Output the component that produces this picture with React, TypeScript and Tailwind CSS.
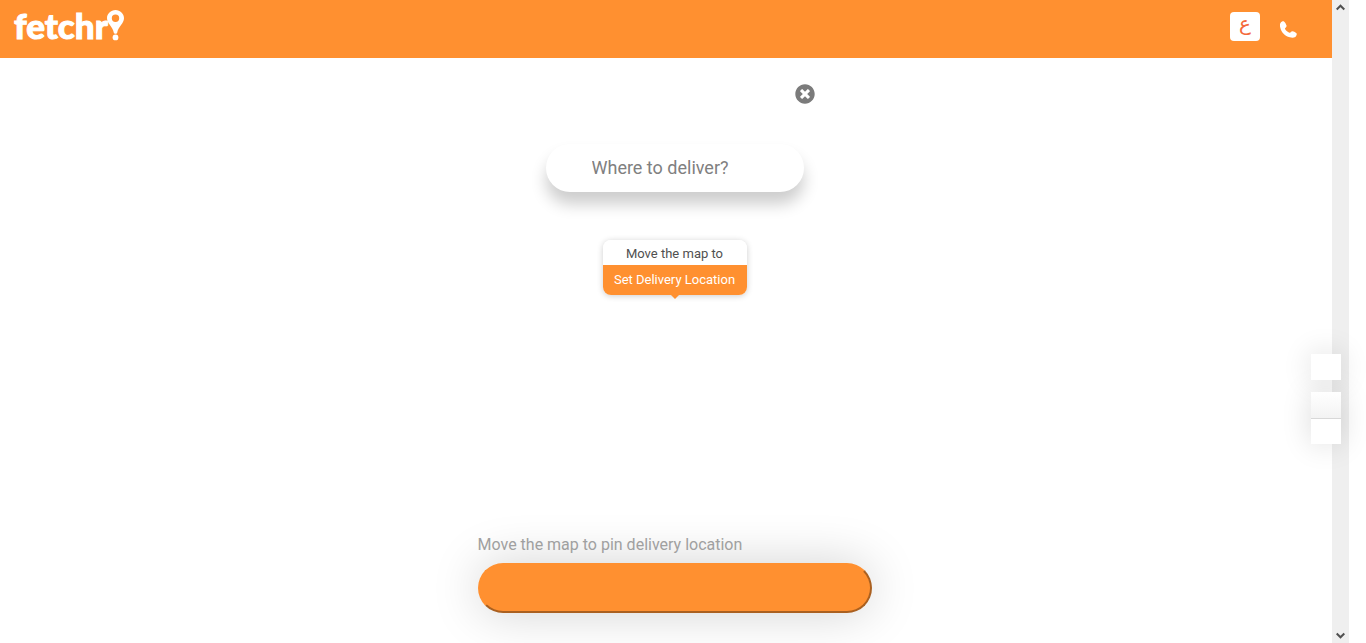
import { FaTimesCircle } from "react-icons/fa";

function Logo() {
  return (
    <a href="#" aria-label="fetchr" className="flex items-start text-white">
      <span className="pt-0.5 font-['Lato',sans-serif] text-[35px] leading-[46px] font-black [-webkit-text-stroke:1px_white]">fetchr</span>
      <svg viewBox="0 0 17 31" className="mt-[10px] -ml-px h-[31px] w-[17px]" fill="currentColor" aria-hidden="true">
        <path
          fillRule="evenodd"
          d="M8.5 0C3.800 0 0 3.700 0 8.300c0 5.200 5.600 8.200 6.900 14.600.200 1 3 1 3.200 0C11.400 16.500 17 13.500 17 8.300 17 3.700 13.200 0 8.500 0Zm0 4.600a3.700 3.700 0 1 1 0 7.400 3.700 3.700 0 0 1 0-7.400Z"
        />
        <circle cx="8.500" cy="27.400" r="2.900" />
      </svg>
    </a>
  );
}

function Header() {
  return (
    <header className="flex h-[58px] shrink-0 items-start justify-between bg-[#ff9030] pr-[35px] pl-[14px]">
      <Logo />
      <nav className="flex items-center gap-5 pt-3">
        <button
          type="button"
          aria-label="Arabic"
          className="flex h-[29px] w-[30px] items-center justify-center rounded bg-white font-['DejaVu_Sans',sans-serif] text-xl leading-5 text-[#f4693b]"
        >
          <span lang="ar" className="-mt-2">ع</span>
        </button>
        <a href="#call" aria-label="Call" className="pt-1.5 text-white">
          <svg viewBox="0 0 52 52" className="size-[17px]" fill="currentColor" aria-hidden="true">
            <path d="M2 5C5 1 10-1 13 2c3 3 6 8 7 12 1 4-4 6-5 9 2 6 8 11 14 13 3 0 5-5 9-5 5 1 10 3 13 7 1 4-1 8-4 11-5 3-11 3-17 1C15 46 4 36 1 21-1 15-1 9 2 5Z" />
          </svg>
        </a>
      </nav>
    </header>
  );
}

function MapCallout() {
  return (
    <div className="mt-12 flex w-36 flex-col items-center text-[13px]">
      <div className="w-full overflow-hidden rounded-lg text-center shadow-[0_1px_6px_rgba(0,0,0,0.2)]">
        <p className="bg-white pt-0.5 leading-[23px] text-[#505050]">Move the map to</p>
        <p className="bg-[#ff9030] leading-[30px] text-white">Set Delivery Location</p>
      </div>
      <svg viewBox="0 0 8 4" className="h-1 w-2" fill="#ff9030" aria-hidden="true">
        <path d="M0 0h8L4 4Z" />
      </svg>
    </div>
  );
}

function MapControls() {
  return (
    <div className="absolute top-[354px] right-[25px] flex w-[30px] flex-col gap-3">
      <button type="button" aria-label="My location" className="relative z-10 h-[26px] bg-white shadow-[0_0_30px_rgba(0,0,0,0.14)]" />
      <div className="flex flex-col divide-y divide-[#d8d8d8] bg-white shadow-[0_0_30px_rgba(0,0,0,0.14)]">
        <button type="button" aria-label="Zoom in" className="relative z-20 h-[27px] bg-linear-to-b from-white to-[#f3f3f3]" />
        <button type="button" aria-label="Zoom out" className="relative z-20 h-[25px] bg-white" />
      </div>
    </div>
  );
}

function ScrollRail() {
  return (
    <div className="flex w-[17px] shrink-0 flex-col items-center justify-between bg-[#efefef] py-1 text-[#505050]" aria-hidden="true">
      <svg viewBox="0 0 9 7" className="h-[7px] w-[9px]" fill="none" stroke="currentColor" strokeWidth="2">
        <path d="M.700 5.500 4.500 1.700 8.300 5.500" />
      </svg>
      <svg viewBox="0 0 9 7" className="h-[7px] w-[9px]" fill="none" stroke="currentColor" strokeWidth="2">
        <path d="M.700 1.500 4.500 5.300 8.300 1.500" />
      </svg>
    </div>
  );
}

export default function App() {
  return (
    <div className="relative flex min-h-screen overflow-hidden bg-white pr-[17px] font-['Roboto',sans-serif]">
      <div className="flex min-w-0 grow flex-col">
        <Header />
        <main className="flex grow flex-col items-center pt-[26px] pb-[30px] pl-[17px]">
          <div className="flex w-[280px] justify-end">
            <button type="button" aria-label="Clear search" className="text-[#7b7b7b]">
              <FaTimesCircle className="size-5" />
            </button>
          </div>
          <input
            type="text"
            aria-label="Where to deliver?"
            placeholder="Where to deliver?"
            className="mt-10 h-12 w-[258px] rounded-3xl bg-white pr-5 pb-0.5 pl-[46px] text-lg text-[#505050] shadow-[0_12px_16px_rgba(0,0,0,0.2)] outline-none placeholder:text-[#808080]"
          />
          <MapCallout />
          <div className="mt-auto flex w-[394px] max-w-full flex-col">
            <p id="pin-hint" className="relative z-10 mb-1.5 text-base leading-6 text-[#a0a0a0]">
              Move the map to pin delivery location
            </p>
            <button
              type="button"
              aria-labelledby="pin-hint"
              className="h-[50px] rounded-full border-2 border-t-[#ff9030] border-r-[#aa6020] border-b-[#aa6020] border-l-[#ff9030] bg-[#ff9030] shadow-[0_0_50px_rgba(0,0,0,0.18)]"
            />
          </div>
        </main>
      </div>
      <ScrollRail />
      <MapControls />
    </div>
  );
}
